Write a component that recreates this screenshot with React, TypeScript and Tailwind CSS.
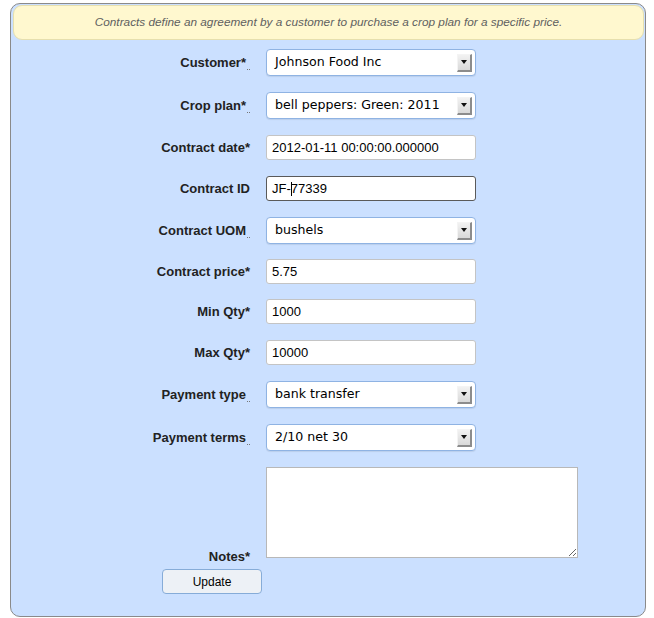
import React from "react";

type Row = {
  label: string;
  kind: "select" | "input" | "focused";
  value: string;
  mt: string;
};

const rows: Row[] = [
  { label: "Customer*", kind: "select", value: "Johnson Food Inc", mt: "mt-[9px]" },
  { label: "Crop plan*", kind: "select", value: "bell peppers: Green: 2011", mt: "mt-[16px]" },
  { label: "Contract date*", kind: "input", value: "2012-01-11 00:00:00.000000", mt: "mt-[16px]" },
  { label: "Contract ID", kind: "focused", value: "", mt: "mt-[16px]" },
  { label: "Contract UOM", kind: "select", value: "bushels", mt: "mt-[16px]" },
  { label: "Contract price*", kind: "input", value: "5.75", mt: "mt-[15px]" },
  { label: "Min Qty*", kind: "input", value: "1000", mt: "mt-[15px]" },
  { label: "Max Qty*", kind: "input", value: "10000", mt: "mt-[16px]" },
  { label: "Payment type", kind: "select", value: "bank transfer", mt: "mt-[16px]" },
  { label: "Payment terms", kind: "select", value: "2/10 net 30", mt: "mt-[16px]" },
];

const sans = "font-['Liberation_Sans',Arial,sans-serif]";

function SelectBox({ value }: { value: string }) {
  return (
    <div className="flex h-[27px] w-[210px] items-center justify-between rounded-[4px] border border-[#8fb3e3] bg-white pl-[8px] pr-[3px] shadow-[0_1px_1px_rgba(0,0,0,0.08)]">
      <span className="font-['DejaVu_Sans',Verdana,sans-serif] text-[12.6px] leading-none text-black">
        {value}
      </span>
      <div className="flex h-[18px] w-[15px] items-center justify-center border-b-2 border-r-2 border-l border-t border-b-[#8c8c8c] border-r-[#8c8c8c] border-l-[#f4f4f4] border-t-[#f4f4f4] bg-gradient-to-b from-[#f2f2f2] to-[#d9d9d9]">
        <svg width="6" height="4" viewBox="0 0 6 4">
          <path d="M0 0 L6 0 L3 4 Z" fill="#111" />
        </svg>
      </div>
    </div>
  );
}

function InputBox({ value, focused }: { value: string; focused?: boolean }) {
  return (
    <div
      className={
        "flex h-[25px] w-[210px] items-center rounded-[3px] bg-white pl-[5px] " +
        (focused ? "border border-[#5a5a5a]" : "border border-[#c4c4c4]")
      }
    >
      <span className={sans + " text-[13px] leading-none text-black"}>
        {focused ? (
          <>
            JF-
            <span className="inline-block h-[14px] w-px -mr-px bg-black align-[-3px]" />
            77339
          </>
        ) : (
          value
        )}
      </span>
    </div>
  );
}

export default function App() {
  return (
    <div className="min-h-[618px] w-[654px] bg-white pt-[3px]">
      <div className="ml-[10px] w-[636px] rounded-[10px] border border-[#8a8a8a] bg-[#cbe0ff] pb-[22px]">
        <div
          className={
            sans +
            " ml-[2px] mt-[1px] flex h-[35px] w-[631px] items-center justify-center rounded-[9px] border border-[#e6dfae] bg-[#fff8cf] text-[11.8px] italic text-[#606060]"
          }
        >
          Contracts define an agreement by a customer to purchase a crop plan for a specific price.
        </div>

        {rows.map((r) => (
          <div key={r.label} className={"flex items-center " + r.mt}>
            <div className={sans + " w-[239px] text-right text-[13px] font-bold leading-[15px] text-[#222]"}>
              {r.label}
              {r.kind === "select" && (
                <span className="ml-px inline-block w-[3px] border-b border-dotted border-[#777] align-[-3px]" />
              )}
            </div>
            <div className="ml-[16px]">
              {r.kind === "select" ? (
                <SelectBox value={r.value} />
              ) : (
                <InputBox value={r.value} focused={r.kind === "focused"} />
              )}
            </div>
          </div>
        ))}

        <div className="mt-[16px] flex items-end">
          <div className={sans + " -mb-[6px] w-[239px] text-right text-[13px] font-bold leading-[15px] text-[#222]"}>
            Notes*
          </div>
          <textarea
            readOnly
            className="ml-[16px] h-[91px] w-[312px] resize border border-[#b8b8b8] bg-white outline-none"
          />
        </div>

        <div className="ml-[151px] mt-[11px]">
          <div
            className={
              sans +
              " flex h-[25px] w-[100px] items-center justify-center rounded-[4px] border border-[#86acd8] bg-[#edf1f6] text-[12px] text-black"
            }
          >
            Update
          </div>
        </div>
      </div>
    </div>
  );
}
